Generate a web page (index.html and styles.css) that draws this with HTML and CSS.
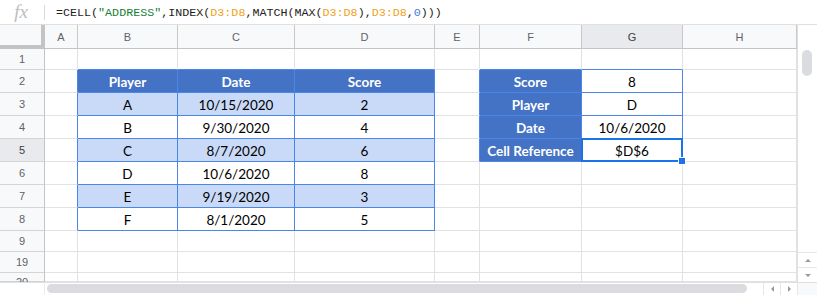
FILE: index.html
```html
<!DOCTYPE html>
<html>
<head>
<meta charset="utf-8">
<link rel="stylesheet" href="styles.css">
</head>
<body>
<div class="fbar">
  <div class="fx">fx</div>
  <div class="fsep"></div>
  <div class="formula">=CELL(<span class="str">"ADDRESS"</span>,INDEX(<span class="rng">D3:D8</span>,MATCH(MAX(<span class="rng">D3:D8</span>),<span class="rng">D3:D8</span>,<span class="num">0</span>)))</div>
</div>
<div class="sheet">
  <div class="corner"></div>
  <div class="ch">A</div><div class="ch">B</div><div class="ch">C</div><div class="ch">D</div><div class="ch">E</div><div class="ch">F</div><div class="ch sel">G</div><div class="ch">H</div>
  <div class="vscroll">
    <div class="vthumb"></div>
    <div class="vspace"></div>
    <div class="sbtn"><span class="tri up"></span></div>
    <div class="sbtn"><span class="tri down"></span></div>
  </div>

  <div class="rh">1</div>
  <div class="c"></div><div class="c bb"></div><div class="c bb"></div><div class="c bb"></div><div class="c"></div><div class="c bb"></div><div class="c bb"></div><div class="c"></div>

  <div class="rh">2</div>
  <div class="c br"></div><div class="c th">Player</div><div class="c th">Date</div><div class="c th">Score</div><div class="c br"></div><div class="c th">Score</div><div class="c tw">8</div><div class="c"></div>

  <div class="rh">3</div>
  <div class="c br"></div><div class="c lt">A</div><div class="c lt">10/15/2020</div><div class="c lt">2</div><div class="c br"></div><div class="c th">Player</div><div class="c tw">D</div><div class="c"></div>

  <div class="rh">4</div>
  <div class="c br"></div><div class="c tw">B</div><div class="c tw">9/30/2020</div><div class="c tw">4</div><div class="c br"></div><div class="c th">Date</div><div class="c tw">10/6/2020</div><div class="c"></div>

  <div class="rh sel">5</div>
  <div class="c br"></div><div class="c lt">C</div><div class="c lt">8/7/2020</div><div class="c lt">6</div><div class="c br"></div><div class="c th">Cell Reference</div><div class="c tw active">$D$6</div><div class="c"></div>

  <div class="rh">6</div>
  <div class="c br"></div><div class="c tw">D</div><div class="c tw">10/6/2020</div><div class="c tw">8</div><div class="c"></div><div class="c"></div><div class="c"></div><div class="c"></div>

  <div class="rh">7</div>
  <div class="c br"></div><div class="c lt">E</div><div class="c lt">9/19/2020</div><div class="c lt">3</div><div class="c"></div><div class="c"></div><div class="c"></div><div class="c"></div>

  <div class="rh">8</div>
  <div class="c br"></div><div class="c tw">F</div><div class="c tw">8/1/2020</div><div class="c tw">5</div><div class="c"></div><div class="c"></div><div class="c"></div><div class="c"></div>

  <div class="rh">9</div>
  <div class="c"></div><div class="c"></div><div class="c"></div><div class="c"></div><div class="c"></div><div class="c"></div><div class="c"></div><div class="c"></div>

  <div class="rh">19</div>
  <div class="c"></div><div class="c"></div><div class="c"></div><div class="c"></div><div class="c"></div><div class="c"></div><div class="c"></div><div class="c"></div>

  <div class="rh cut">20</div>
  <div class="c"></div><div class="c"></div><div class="c"></div><div class="c"></div><div class="c"></div><div class="c"></div><div class="c"></div><div class="c"></div>
</div>
<div class="hscroll">
  <div class="hgap"></div>
  <div class="htrack"><div class="hthumb"></div></div>
  <div class="hbtn"><span class="tri left"></span></div>
  <div class="hbtn"><span class="tri right"></span></div>
  <div class="hcorner"></div>
</div>
</body>
</html>
```

FILE: styles.css
```css
* { box-sizing: border-box; }
html, body { margin: 0; padding: 0; background: #fff; overflow: hidden; }
body { width: 817px; height: 295px; font-family: "Liberation Sans", Arial, sans-serif; }

.fbar {
  height: 25px;
  display: flex;
  align-items: center;
  border-bottom: 1px solid #e0e0e0;
}
.fx {
  width: 44px;
  text-align: center;
  font-family: "Liberation Serif", serif;
  font-style: italic;
  font-size: 19px;
  color: #bdbdbd;
  line-height: 24px;
  padding-right: 2px;
}
.fsep { width: 1px; height: 15px; background: #dadada; }
.formula {
  padding-left: 11px;
  font-family: "Liberation Mono", monospace;
  font-size: 11.7px;
  color: #222;
  white-space: nowrap;
  padding-top: 1px;
}
.str { color: #188038; }
.rng { color: #f29f22; }
.num { color: #3d7ee0; }

.sheet {
  display: grid;
  grid-template-columns: 45px 33px 100px 117px 140px 45px 102px 101px 114px 20px;
  grid-template-rows: 24px 21px repeat(7, 23px) 21px 21px 9px;
  overflow: hidden;
}
.corner {
  background: #f8f9fa;
  border-right: 4px solid #c4c4c4;
  border-bottom: 4px solid #c4c4c4;
}
.ch {
  background: #f8f9fa;
  border-right: 1px solid #c8c8c8;
  border-bottom: 1px solid #c4c4c4;
  color: #5f6368;
  font-size: 11px;
  display: flex;
  align-items: center;
  justify-content: center;
  padding-top: 1px;
}
.rh {
  background: #f8f9fa;
  border-right: 1px solid #c4c4c4;
  border-bottom: 1px solid #d4d4d4;
  color: #5f6368;
  font-size: 11px;
  display: flex;
  align-items: center;
  justify-content: center;
}
.rh.cut { align-items: flex-start; padding-top: 3px; }
.sel { background: #e8eaed; color: #3c4043; }

.c {
  border-right: 1px solid #e2e2e2;
  border-bottom: 1px solid #e2e2e2;
  display: flex;
  align-items: center;
  justify-content: center;
  font-family: Lato, "Open Sans", sans-serif;
  font-size: 13.5px;
  color: #000;
  padding-top: 2px;
  white-space: nowrap;
}
.c.br { border-right-color: #4a86e8; }
.c.bb { border-bottom-color: #4a86e8; }
.c.th {
  background: #4472c4;
  color: #fff;
  font-weight: bold;
  border-right-color: #4a86e8;
  border-bottom-color: #4a86e8;
}
.c.lt {
  background: #c9daf8;
  border-right-color: #4a86e8;
  border-bottom-color: #4a86e8;
}
.c.tw {
  border-right-color: #4a86e8;
  border-bottom-color: #4a86e8;
}
.c.active { position: relative; }
.c.active::before {
  content: "";
  position: absolute;
  left: -1px; top: -1px; right: -1px; bottom: -1px;
  border: 2px solid #1a73e8;
}
.c.active::after {
  content: "";
  position: absolute;
  right: -4px; bottom: -4px;
  width: 6px; height: 6px;
  background: #1a73e8;
  border: 1px solid #fff;
}

.vscroll {
  grid-column: 10;
  grid-row: 1 / -1;
  border-left: 1px solid #e0e0e0;
  background: #fff;
  display: flex;
  flex-direction: column;
  align-items: stretch;
}
.vthumb {
  margin: 25px 5px 0 4px;
  height: 26px;
  border-radius: 5px;
  background: #dadce0;
}
.vspace { flex: 1; }
.sbtn {
  height: 15px;
  border-top: 1px solid #e6e6e6;
  display: flex;
  align-items: center;
  justify-content: center;
}

.tri { width: 0; height: 0; display: block; }
.tri.up { border-left: 3px solid transparent; border-right: 3px solid transparent; border-bottom: 3px solid #9a9a9a; }
.tri.down { border-left: 3px solid transparent; border-right: 3px solid transparent; border-top: 3px solid #9a9a9a; }
.tri.left { border-top: 3px solid transparent; border-bottom: 3px solid transparent; border-right: 3px solid #9a9a9a; }
.tri.right { border-top: 3px solid transparent; border-bottom: 3px solid transparent; border-left: 3px solid #9a9a9a; }

.hscroll {
  height: 13px;
  display: flex;
  border-top: 1px solid #e0e0e0;
  background: #fff;
}
.hgap { width: 45px; border-right: 1px solid #ececec; }
.htrack { width: 718px; padding: 1px 0 2px 2px; }
.hthumb { width: 700px; height: 9px; border-radius: 5px; background: #dadce0; }
.hbtn {
  width: 17px;
  border-left: 1px solid #e6e6e6;
  display: flex;
  align-items: center;
  justify-content: center;
}
.hcorner { flex: 1; border-left: 1px solid #e6e6e6; background: #f8f9fa; }
```
